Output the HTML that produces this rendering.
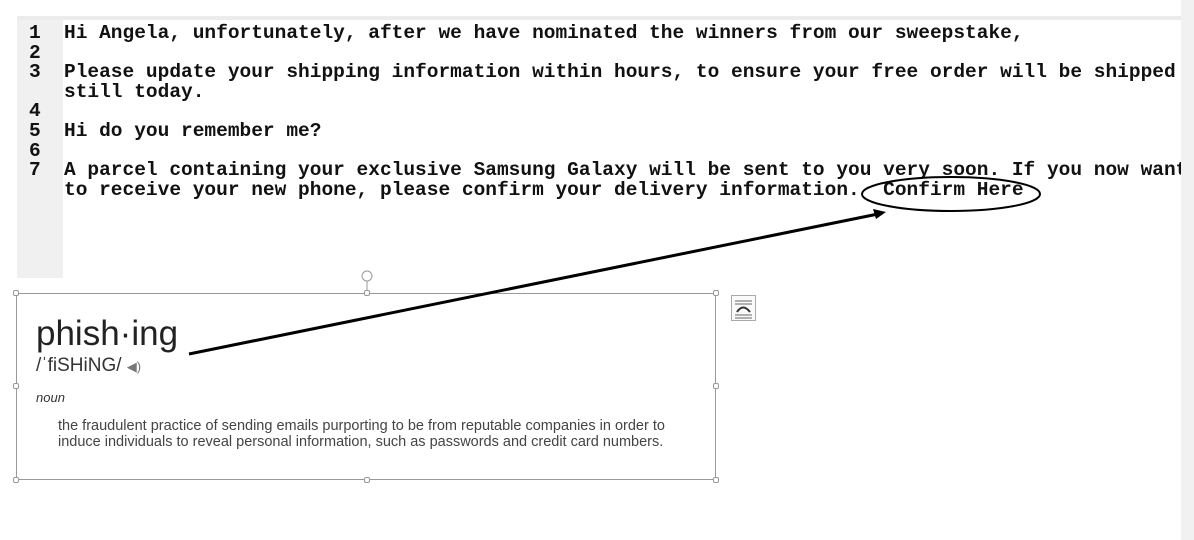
<!DOCTYPE html>
<html><head><style>
body{margin:0;width:1194px;height:540px;background:#fff;position:relative;overflow:hidden;font-family:"Liberation Sans",sans-serif}
.top{position:absolute;left:17px;top:16px;width:1164px;height:4px;background:#ececec}
.right{position:absolute;left:1181px;top:0;width:13px;height:540px;background:#f1f1f1;z-index:2}
.gut{position:absolute;left:17px;top:20px;width:46px;height:258px;background:#f0f0f0}
.code{position:absolute;top:24px;font:bold 19.5px/19.6px "Liberation Mono",monospace;color:#111;white-space:pre;margin:0}
.box{position:absolute;left:16px;top:293px;width:700px;height:187px;border:1px solid #999;box-sizing:border-box}
.h{position:absolute;width:6px;height:6px;border:1px solid #999;background:#fff;border-radius:2px;box-sizing:border-box}
</style></head><body>
<div class="top"></div><div class="right"></div><div class="gut"></div>
<pre class="code" style="left:29px">1
2
3

4
5
6
7</pre>
<pre class="code" style="left:64px">Hi Angela, unfortunately, after we have nominated the winners from our sweepstake,

Please update your shipping information within hours, to ensure your free order will be shipped
still today.

Hi do you remember me?

A parcel containing your exclusive Samsung Galaxy will be sent to you very soon. If you now want
to receive your new phone, please confirm your delivery information.  Confirm Here</pre>
<div class="box"></div>
<div class="h" style="left:13px;top:290px"></div><div class="h" style="left:364px;top:290px"></div><div class="h" style="left:713px;top:290px"></div>
<div class="h" style="left:13px;top:383px"></div><div class="h" style="left:713px;top:383px"></div>
<div class="h" style="left:13px;top:477px"></div><div class="h" style="left:364px;top:477px"></div><div class="h" style="left:713px;top:477px"></div>
<div style="position:absolute;left:36px;top:314px;font-size:35px;color:#222">phish·ing</div>
<div style="position:absolute;left:36px;top:355px;font-size:19px;color:#333">/ˈfiSHiNG/ <span style="font-size:13px;color:#777">◀)</span></div>
<div style="position:absolute;left:36px;top:390px;font-size:13px;font-style:italic;color:#333">noun</div>
<div style="position:absolute;left:58px;top:418px;font-size:14.5px;line-height:16px;color:#444;white-space:nowrap">the fraudulent practice of sending emails purporting to be from reputable companies in order to<br>induce individuals to reveal personal information, such as passwords and credit card numbers.</div>
<div style="position:absolute;left:731px;top:295px;width:25px;height:26px;border:1px solid #aaa;box-sizing:border-box;background:#fafafa"></div>
<svg style="position:absolute;left:0;top:0" width="1194" height="540">
<g stroke="#666" stroke-width="1"><line x1="735" y1="301" x2="752" y2="301"/><line x1="735" y1="304" x2="752" y2="304"/><line x1="735" y1="315" x2="752" y2="315"/><line x1="735" y1="318" x2="752" y2="318"/></g>
<path d="M737 312 Q743 303 750 312" stroke="#333" stroke-width="2" fill="none"/>
<circle cx="367" cy="276" r="5" stroke="#999" fill="none"/><line x1="367" y1="281" x2="367" y2="290" stroke="#999"/>
<line x1="189" y1="354" x2="878" y2="214" stroke="#000" stroke-width="3"/>
<path d="M886 212 L873 209 L876 219 Z" fill="#000"/>
<ellipse cx="951" cy="194" rx="89" ry="17" stroke="#000" stroke-width="2" fill="none"/>
</svg>
</body></html>
